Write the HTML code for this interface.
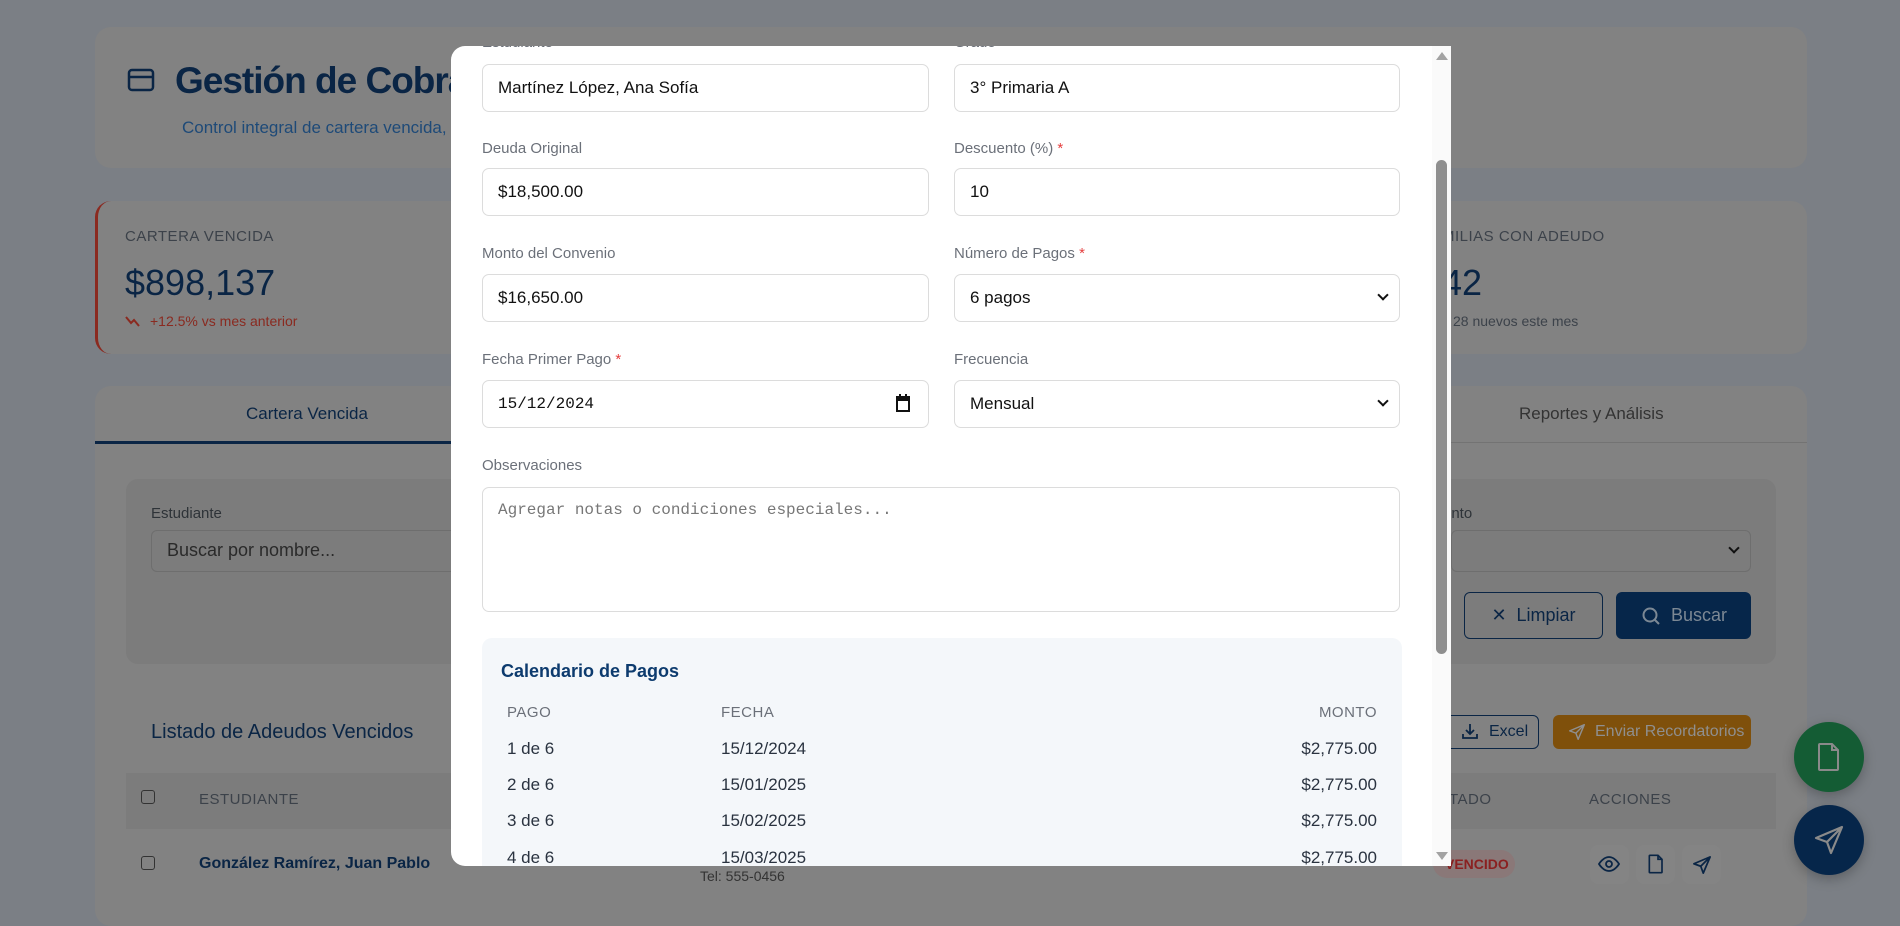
<!DOCTYPE html>
<html><head><meta charset="utf-8"><style>
*{box-sizing:border-box;margin:0;padding:0}
body{width:1900px;height:905px;overflow:hidden;background:#7b7f85;font-family:"Liberation Sans",sans-serif;position:relative}
.a{position:absolute}
.card{position:absolute;background:#828282;border-radius:16px}
.nv{color:#0a2545}
.lbl{position:absolute;font-size:15px;color:#6b7079}
.req{color:#e53e3e}
.inp{position:absolute;height:48px;border:1px solid #dcdcdc;border-radius:7px;background:#fff;font-size:17px;color:#111;padding-left:15px;line-height:46px}
.chev{position:absolute;right:12px;top:16px;width:8px;height:8px;border-right:2px solid #111;border-bottom:2px solid #111;transform:rotate(45deg)}
.row{position:absolute;font-size:17px;color:#2a3340}
.hd{position:absolute;font-size:15px;color:#6b7079;letter-spacing:.5px}
</style></head><body>
<div class="card" style="left:95px;top:27px;width:1712px;height:141px"></div>
<svg class="a" style="left:127px;top:68px" width="28" height="24" viewBox="0 0 28 24"><rect x="2" y="2" width="24" height="20" rx="3" fill="none" stroke="#0a2545" stroke-width="2.5"/><line x1="2" y1="9" x2="26" y2="9" stroke="#0a2545" stroke-width="2.5"/></svg>
<div class="a nv" style="left:175px;top:60px;font-size:37px;font-weight:bold;letter-spacing:-1px">Gestión de Cobranza</div>
<div class="a" style="left:182px;top:118px;font-size:17px;color:#1e4a78">Control integral de cartera vencida, convenios</div>
<div class="card" style="left:95px;top:201px;width:1712px;height:153px;border-left:3px solid #8b2a20"></div>
<div class="a" style="left:125px;top:228px;font-size:15px;color:#3c424a;letter-spacing:.5px">CARTERA VENCIDA</div>
<div class="a nv" style="left:125px;top:262px;font-size:36px">$898,137</div>
<svg class="a" style="left:125px;top:315px" width="16" height="12" viewBox="0 0 16 12"><path d="M1 2l5 6 3-3 5 6" fill="none" stroke="#8a2a20" stroke-width="2"/></svg>
<div class="a" style="left:150px;top:313px;font-size:14px;color:#8a2a20">+12.5% vs mes anterior</div>
<div class="a" style="left:1442px;top:228px;font-size:15px;color:#3c424a;letter-spacing:.5px">MILIAS CON ADEUDO</div>
<div class="a nv" style="left:1442px;top:262px;font-size:36px">42</div>
<div class="a" style="left:1453px;top:313px;font-size:14px;color:#3c424a">28 nuevos este mes</div>
<div class="card" style="left:95px;top:386px;width:1712px;height:540px"></div>
<div class="a" style="left:95px;top:442px;width:1712px;height:1px;background:#737373"></div>
<div class="a" style="left:95px;top:441px;width:360px;height:3px;background:#0a2545"></div>
<div class="a nv" style="left:246px;top:404px;font-size:17px">Cartera Vencida</div>
<div class="a" style="left:1519px;top:404px;font-size:17px;color:#333">Reportes y Análisis</div>
<div class="a" style="left:126px;top:479px;width:1650px;height:185px;background:#7c7c7c;border-radius:12px"></div>
<div class="a" style="left:151px;top:505px;font-size:15px;color:#2e3338">Estudiante</div>
<div class="a" style="left:151px;top:530px;width:400px;height:42px;border:1px solid #6e6e6e;border-radius:6px;font-size:18px;color:#2a2a2a;padding:9px 15px">Buscar por nombre...</div>
<div class="a" style="left:1443px;top:505px;font-size:15px;color:#2e3338">onto</div>
<div class="a" style="left:1451px;top:530px;width:300px;height:42px;border:1px solid #6e6e6e;border-radius:6px"><div class="chev" style="top:13px"></div></div>
<div class="a" style="left:1464px;top:592px;width:139px;height:47px;border:1px solid #0a2545;border-radius:6px;font-size:18px;color:#0a2545;text-align:center;line-height:45px">✕&nbsp; Limpiar</div>
<div class="a" style="left:1616px;top:592px;width:135px;height:47px;background:#06264a;border-radius:6px;font-size:18px;color:#7c8894;line-height:47px;padding-left:55px">Buscar</div>
<svg class="a" style="left:1641px;top:606px" width="20" height="20" viewBox="0 0 20 20"><circle cx="9" cy="9" r="6.5" fill="none" stroke="#7c8894" stroke-width="2"/><path d="M14 14l4 4" stroke="#7c8894" stroke-width="2"/></svg>
<div class="a nv" style="left:151px;top:721px;font-size:20px">Listado de Adeudos Vencidos</div>
<div class="a" style="left:1440px;top:715px;width:99px;height:34px;border:1px solid #0a2545;border-radius:6px;font-size:16px;color:#0a2545;line-height:32px;padding-left:48px">Excel</div>
<svg class="a" style="left:1461px;top:722px" width="18" height="18" viewBox="0 0 18 18"><path d="M9 2v10M5 8l4 4 4-4M2 12v4h14v-4" fill="none" stroke="#0a2545" stroke-width="1.8"/></svg>
<div class="a" style="left:1553px;top:715px;width:198px;height:34px;background:#7f500b;border-radius:6px;font-size:16px;color:#8f8f8f;line-height:34px;padding-left:42px">Enviar Recordatorios</div>
<svg class="a" style="left:1568px;top:723px" width="18" height="18" viewBox="0 0 32 32"><path d="M29 3L3 14l11 4 4 11z M29 3L14 18" fill="none" stroke="#8f8f8f" stroke-width="2.5" stroke-linejoin="round"/></svg>
<div class="a" style="left:126px;top:773px;width:1650px;height:56px;background:#7c7c7c"></div>
<div class="a" style="left:141px;top:790px;width:14px;height:14px;border:1.5px solid #333;border-radius:3px"></div>
<div class="a" style="left:199px;top:791px;font-size:15px;color:#3c424a;letter-spacing:.5px">ESTUDIANTE</div>
<div class="a" style="left:1449px;top:791px;font-size:15px;color:#3c424a;letter-spacing:.5px">TADO</div>
<div class="a" style="left:1589px;top:791px;font-size:15px;color:#3c424a;letter-spacing:.5px">ACCIONES</div>
<div class="a" style="left:141px;top:856px;width:14px;height:14px;border:1.5px solid #333;border-radius:3px"></div>
<div class="a nv" style="left:199px;top:855px;font-size:16px;font-weight:bold">González Ramírez, Juan Pablo</div>
<div class="a" style="left:700px;top:868px;font-size:14px;color:#333">Tel: 555-0456</div>
<div class="a" style="left:1433px;top:850px;width:82px;height:28px;background:#8a7878;border-radius:14px;font-size:14px;color:#8a2020;line-height:28px;padding-left:12px;font-weight:bold">VENCIDO</div>
<div class="a" style="left:1590px;top:845px;width:39px;height:39px;background:#848484;border-radius:8px"></div>
<svg class="a" style="left:1598px;top:855px" width="22" height="18" viewBox="0 0 22 18"><path d="M1 9s4-7 10-7 10 7 10 7-4 7-10 7S1 9 1 9z" fill="none" stroke="#0a2545" stroke-width="1.8"/><circle cx="11" cy="9" r="3" fill="none" stroke="#0a2545" stroke-width="1.8"/></svg>
<div class="a" style="left:1636px;top:845px;width:39px;height:39px;background:#848484;border-radius:8px"></div>
<svg class="a" style="left:1648px;top:853px" width="16" height="22" viewBox="0 0 24 30"><path d="M3 2h12l6 6v19a1 1 0 0 1-1 1H3a1 1 0 0 1-1-1V3a1 1 0 0 1 1-1z M15 2v6h6" fill="none" stroke="#0a2545" stroke-width="2.5"/></svg>
<div class="a" style="left:1682px;top:845px;width:39px;height:39px;background:#848484;border-radius:8px"></div>
<svg class="a" style="left:1692px;top:855px" width="20" height="20" viewBox="0 0 32 32"><path d="M29 3L3 14l11 4 4 11z M29 3L14 18" fill="none" stroke="#0a2545" stroke-width="2.8" stroke-linejoin="round"/></svg>
<div class="a" style="left:1794px;top:722px;width:70px;height:70px;border-radius:50%;background:#145c34;box-shadow:0 4px 12px rgba(0,0,0,.25)">
<svg class="a" style="left:23px;top:20px" width="24" height="30" viewBox="0 0 24 30"><path d="M3 2h12l6 6v19a1 1 0 0 1-1 1H3a1 1 0 0 1-1-1V3a1 1 0 0 1 1-1z M15 2v6h6" fill="none" stroke="#8a8a8a" stroke-width="2"/></svg></div>
<div class="a" style="left:1794px;top:805px;width:70px;height:70px;border-radius:50%;background:#06264a;box-shadow:0 4px 12px rgba(0,0,0,.25)">
<svg class="a" style="left:19px;top:19px" width="32" height="32" viewBox="0 0 32 32"><path d="M29 3L3 14l11 4 4 11z M29 3L14 18" fill="none" stroke="#8a8a8a" stroke-width="2.2" stroke-linejoin="round"/></svg></div>

<div class="a" style="left:451px;top:46px;width:1000px;height:820px;background:#fff;border-radius:14px 0 0 14px;overflow:hidden">
 <div class="lbl" style="left:31px;top:-12px">Estudiante</div>
 <div class="lbl" style="left:503px;top:-12px">Grado</div>
 <div class="inp" style="left:31px;top:18px;width:447px">Martínez López, Ana Sofía</div>
 <div class="inp" style="left:503px;top:18px;width:446px">3° Primaria A</div>
 <div class="lbl" style="left:31px;top:94px">Deuda Original</div>
 <div class="lbl" style="left:503px;top:94px">Descuento (%) <span class="req">*</span></div>
 <div class="inp" style="left:31px;top:122px;width:447px">$18,500.00</div>
 <div class="inp" style="left:503px;top:122px;width:446px">10</div>
 <div class="lbl" style="left:31px;top:199px">Monto del Convenio</div>
 <div class="lbl" style="left:503px;top:199px">Número de Pagos <span class="req">*</span></div>
 <div class="inp" style="left:31px;top:228px;width:447px">$16,650.00</div>
 <div class="inp" style="left:503px;top:228px;width:446px">6 pagos<div class="chev"></div></div>
 <div class="lbl" style="left:31px;top:305px">Fecha Primer Pago <span class="req">*</span></div>
 <div class="lbl" style="left:503px;top:305px">Frecuencia</div>
 <div class="inp" style="left:31px;top:334px;width:447px;font-family:'Liberation Mono',monospace;font-size:16px">15/12/2024
  <svg class="a" style="right:18px;top:13px" width="14" height="18" viewBox="0 0 14 18"><rect x="1" y="3" width="12" height="14" fill="none" stroke="#111" stroke-width="2"/><rect x="1" y="3" width="12" height="4" fill="#111"/><line x1="4" y1="0" x2="4" y2="3" stroke="#111" stroke-width="2"/><line x1="10" y1="0" x2="10" y2="3" stroke="#111" stroke-width="2"/></svg></div>
 <div class="inp" style="left:503px;top:334px;width:446px">Mensual<div class="chev"></div></div>
 <div class="lbl" style="left:31px;top:411px">Observaciones</div>
 <div class="inp" style="left:31px;top:441px;width:918px;height:125px;line-height:normal;padding-top:13px;font-family:'Liberation Mono',monospace;font-size:16px;color:#777">Agregar notas o condiciones especiales...</div>
 <div class="a" style="left:31px;top:592px;width:920px;height:260px;background:#f4f7fa;border-radius:10px">
  <div class="a" style="left:19px;top:23px;font-size:18px;font-weight:bold;color:#0d3b6e">Calendario de Pagos</div>
  <div class="hd" style="left:25px;top:66px">PAGO</div>
  <div class="hd" style="left:239px;top:66px">FECHA</div>
  <div class="hd" style="right:25px;top:66px">MONTO</div>
  <div class="row" style="left:25px;top:101px">1 de 6</div><div class="row" style="left:239px;top:101px">15/12/2024</div><div class="row" style="right:25px;top:101px">$2,775.00</div>
  <div class="row" style="left:25px;top:137px">2 de 6</div><div class="row" style="left:239px;top:137px">15/01/2025</div><div class="row" style="right:25px;top:137px">$2,775.00</div>
  <div class="row" style="left:25px;top:173px">3 de 6</div><div class="row" style="left:239px;top:173px">15/02/2025</div><div class="row" style="right:25px;top:173px">$2,775.00</div>
  <div class="row" style="left:25px;top:210px">4 de 6</div><div class="row" style="left:239px;top:210px">15/03/2025</div><div class="row" style="right:25px;top:210px">$2,775.00</div>
 </div>
 <div class="a" style="left:981px;top:0;width:19px;height:820px;background:#fafafa"></div>
 <div class="a" style="left:985px;top:114px;width:11px;height:494px;background:#8f8f8f;border-radius:6px"></div>
 <div class="a" style="left:985px;top:6px;width:0;height:0;border-left:6px solid transparent;border-right:6px solid transparent;border-bottom:8px solid #a3a3a3"></div>
 <div class="a" style="left:985px;top:806px;width:0;height:0;border-left:6px solid transparent;border-right:6px solid transparent;border-top:8px solid #a3a3a3"></div>
</div>
</body></html>
